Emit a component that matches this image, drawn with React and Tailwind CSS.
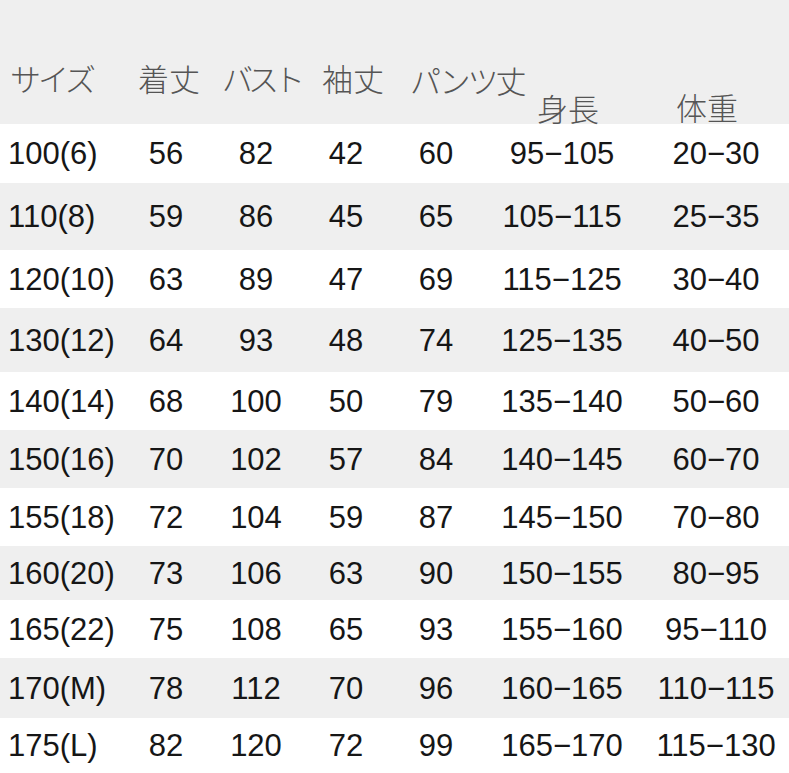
import React from 'react';

// column widths for the data rows (sum = 789)
const COLS = ['w-[121px] pl-[8px] text-left', 'w-[90px] text-center', 'w-[90px] text-center', 'w-[90px] text-center', 'w-[90px] text-center', 'w-[162px] text-center', 'w-[146px] text-center'];

const ROWS = [
  { h: 'h-[59px]', bg: 'bg-white',     cells: ['100(6)', '56', '82', '42', '60', '95−105', '20−30'] },
  { h: 'h-[67px]', bg: 'bg-[#efefef]', cells: ['110(8)', '59', '86', '45', '65', '105−115', '25−35'] },
  { h: 'h-[58px]', bg: 'bg-white',     cells: ['120(10)', '63', '89', '47', '69', '115−125', '30−40'] },
  { h: 'h-[64px]', bg: 'bg-[#efefef]', cells: ['130(12)', '64', '93', '48', '74', '125−135', '40−50'] },
  { h: 'h-[58px]', bg: 'bg-white',     cells: ['140(14)', '68', '100', '50', '79', '135−140', '50−60'] },
  { h: 'h-[58px]', bg: 'bg-[#efefef]', cells: ['150(16)', '70', '102', '57', '84', '140−145', '60−70'] },
  { h: 'h-[58px]', bg: 'bg-white',     cells: ['155(18)', '72', '104', '59', '87', '145−150', '70−80'] },
  { h: 'h-[54px]', bg: 'bg-[#efefef]', cells: ['160(20)', '73', '106', '63', '90', '150−155', '80−95'] },
  { h: 'h-[58px]', bg: 'bg-white',     cells: ['165(22)', '75', '108', '65', '93', '155−160', '95−110'] },
  { h: 'h-[60px]', bg: 'bg-[#efefef]', cells: ['170(M)', '78', '112', '70', '96', '160−165', '110−115'] },
  { h: 'h-[55px]', bg: 'bg-white',     cells: ['175(L)', '82', '120', '72', '99', '165−170', '115−130'] },
];

const HEAD = [
  { label: 'サイズ',   cls: 'w-[138px] pl-[10px] pt-[62px] tracking-[-3px]' },
  { label: '着丈',     cls: 'w-[84px] pt-[62px]' },
  { label: 'バスト',   cls: 'w-[100px] pt-[62px] tracking-[-5px]' },
  { label: '袖丈',     cls: 'w-[88px] pt-[62px]' },
  { label: 'パンツ丈', cls: 'w-[127px] pt-[64px] tracking-[-3px]' },
  { label: '身長',     cls: 'w-[139px] pt-[92px]' },
  { label: '体重',     cls: 'w-[113px] pt-[91px]' },
];

export default function App() {
  return (
    <div className="w-[789px] h-[773px] overflow-hidden bg-white" style={{ fontFamily: '"Liberation Sans", Arial, sans-serif' }}>
      {/* Header */}
      <div className="flex h-[124px] bg-[#efefef] text-[#555]" style={{ fontFamily: '"Noto Sans CJK JP", sans-serif' }}>
        {HEAD.map(h => (
          <div key={h.label} className={`${h.cls} shrink-0 text-[31px] leading-none font-light whitespace-nowrap`}>{h.label}</div>
        ))}
      </div>

      {/* Rows */}
      {ROWS.map(r => (
        <div key={r.cells[0]} className={`flex items-center ${r.h} ${r.bg} text-[#161616]`}>
          {r.cells.map((c, i) => (
            <div key={i} className={`${COLS[i]} shrink-0 text-[31px] leading-none whitespace-nowrap`}>{c}</div>
          ))}
        </div>
      ))}
    </div>
  );
}
